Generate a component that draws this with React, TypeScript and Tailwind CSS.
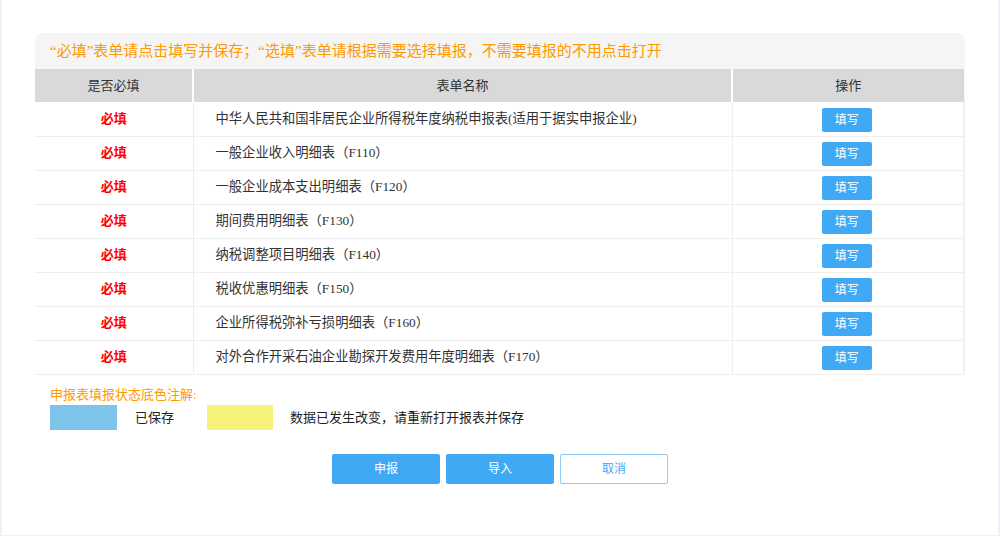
import React from "react";

const rows = [
  "中华人民共和国非居民企业所得税年度纳税申报表(适用于据实申报企业)",
  "一般企业收入明细表（F110）",
  "一般企业成本支出明细表（F120）",
  "期间费用明细表（F130）",
  "纳税调整项目明细表（F140）",
  "税收优惠明细表（F150）",
  "企业所得税弥补亏损明细表（F160）",
  "对外合作开采石油企业勘探开发费用年度明细表（F170）",
];

const font = { fontFamily: '"Liberation Serif", "Noto Sans CJK SC", serif' };

export default function App() {
  return (
    <div className="w-[1000px] h-[537px] bg-white overflow-hidden" style={font}>
      <div className="h-[536px] border-l-2 border-r-2 border-b border-[#f0f0f7] pt-[33px] px-[33px]">
        {/* Form card */}
        <div className="w-[930px] rounded-t-lg bg-[#f5f5f5]">
          <div className="h-[36px] flex items-center pl-[15px] text-[15px] text-[#ff9900]">
            “必填”表单请点击填写并保存；“选填”表单请根据需要选择填报，不需要填报的不用点击打开
          </div>
          <table className="w-[929px] border-collapse text-[13px] text-[#333] bg-white">
            <thead>
              <tr className="h-[33px] bg-[#d9d9d9]">
                <th className="w-[158px] font-normal border-r-2 border-white">是否必填</th>
                <th className="w-[539px] font-normal border-r-2 border-white">表单名称</th>
                <th className="font-normal">操作</th>
              </tr>
            </thead>
            <tbody>
              {rows.map((name) => (
                <tr key={name} className="h-[34px] border-b border-[#eeeeee]">
                  <td className="text-center font-bold text-[#ff0000] border-r border-[#eeeeee]">必填</td>
                  <td className="pl-[22px] text-[13.3px] border-r border-[#eeeeee]">{name}</td>
                  <td className="text-center border-r border-[#eeeeee]">
                    <button className="w-[50px] h-[24px] mt-[2px] mr-[2px] rounded-[2px] bg-[#3fa9f5] text-white text-[12px]">
                      填写
                    </button>
                  </td>
                </tr>
              ))}
            </tbody>
          </table>
        </div>

        {/* Legend */}
        <div className="pl-[15px] pt-[10px]">
          <div className="text-[13px] text-[#ff9900]">申报表填报状态底色注解:</div>
          <div className="flex items-center mt-[1px] text-[13px] text-[#222]">
            <div className="w-[67px] h-[25px] bg-[#7dc3ea]" />
            <span className="ml-[18px]">已保存</span>
            <div className="w-[66px] h-[25px] bg-[#f5f27a] ml-[33px]" />
            <span className="ml-[17px]">数据已发生改变，请重新打开报表并保存</span>
          </div>
        </div>

        {/* Actions */}
        <div className="flex justify-center gap-[6px] mt-[24px] text-[12px]">
          <button className="w-[108px] h-[30px] rounded-[2px] bg-[#3fa9f5] text-white">申报</button>
          <button className="w-[108px] h-[30px] rounded-[2px] bg-[#3fa9f5] text-white">导入</button>
          <button className="w-[108px] h-[30px] rounded-[2px] bg-white border border-[#8fccf7] text-[#3fa9f5]">取消</button>
        </div>
      </div>
    </div>
  );
}
